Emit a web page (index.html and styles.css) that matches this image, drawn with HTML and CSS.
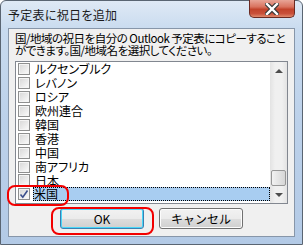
FILE: index.html
```html
<!DOCTYPE html>
<html lang="ja">
<head>
    <meta charset="UTF-8">
    <title>予定表に祝日を追加</title>
    <link rel="stylesheet" href="styles.css">
</head>
<body>
    <div class="window">
        <div class="titlebar">
            <span class="title">予定表に祝日を追加</span>
            <div class="close-btn">
                <svg width="14" height="12" viewBox="0 0 14 12">
                    <path d="M2 1 L12 11 M12 1 L2 11" stroke="#3a3a3a" stroke-width="4.6" stroke-linecap="square"/>
                    <path d="M2 1 L12 11 M12 1 L2 11" stroke="#fff" stroke-width="2.4" stroke-linecap="square"/>
                </svg>
            </div>
        </div>
        <div class="client">
            <p class="intro">国/地域の祝日を自分の Outlook 予定表にコピーすること<br>ができます。国/地域名を選択してください。</p>
            <div class="listbox">
                <ul class="items">
                    <li><span class="check"></span>ルクセンブルク</li>
                    <li><span class="check"></span>レバノン</li>
                    <li><span class="check"></span>ロシア</li>
                    <li><span class="check"></span>欧州連合</li>
                    <li><span class="check"></span>韓国</li>
                    <li><span class="check"></span>香港</li>
                    <li><span class="check"></span>中国</li>
                    <li><span class="check"></span>南アフリカ</li>
                    <li class="cut"><span class="check"></span>日本</li>
                    <li class="selected">
                        <span class="check">
                            <svg width="10" height="10" viewBox="0 0 10 10">
                                <path d="M1.5 5.5 L3.8 8.2 L8.5 1.5" stroke="#3b4f8c" stroke-width="1.6" fill="none"/>
                            </svg>
                        </span>
                        <span class="label">米国</span>
                    </li>
                </ul>
                <div class="scrollbar">
                    <span class="arrow up"></span>
                    <span class="track"><span class="thumb"></span></span>
                    <span class="arrow down"></span>
                </div>
            </div>
            <div class="buttons">
                <button class="btn default">OK</button>
                <button class="btn">キャンセル</button>
            </div>
        </div>
    </div>
    <div class="mark mark-item"></div>
    <div class="mark mark-ok"></div>
</body>
</html>
```

FILE: styles.css
```css
body {
    margin: 0;
    width: 303px;
    height: 245px;
    overflow: hidden;
    background: #fff;
    font-family: "Noto Sans CJK JP", sans-serif;
    font-feature-settings: "palt";
    font-size: 12px;
    color: #000;
}

.window {
    box-sizing: border-box;
    height: 245px;
    padding: 0 7px 7px 7px;
    border: 1px solid #5a6572;
    border-radius: 6px 6px 0 0;
    background: linear-gradient(to bottom, #dfe9f5 0, #c9dbef 28px, #bcd1ea 120px, #b3cae6 100%);
    display: flex;
    flex-direction: column;
}

.titlebar {
    height: 27px;
    display: flex;
    align-items: flex-start;
}

.title {
    padding: 6px 0 0 0;
    line-height: 16px;
    color: #1a1a1a;
    letter-spacing: 0.3px;
}

.close-btn {
    margin-left: auto;
    width: 46px;
    height: 18px;
    margin-top: -1px;
    box-sizing: border-box;
    border: 1px solid #6b2a22;
    border-top: none;
    border-radius: 0 0 5px 5px;
    background: linear-gradient(to bottom, #e8a597 0, #d9735f 40%, #c2432b 55%, #c9503a 80%, #e08a6d 100%);
    display: flex;
    align-items: center;
    justify-content: center;
}

.client {
    flex: 1;
    background: #f0f0f0;
    border: 1px solid #8796a9;
    display: flex;
    flex-direction: column;
    padding: 0 6px;
}

.intro {
    margin: 3px 0 0 0;
    line-height: 12px;
    font-size: 11.5px;
    letter-spacing: -0.5px;
    white-space: nowrap;
}

.listbox {
    margin-top: 5px;
    height: 141px;
    border: 1px solid #828790;
    background: #fff;
    display: flex;
}

.items {
    list-style: none;
    margin: 0;
    padding: 0;
    flex: 1;
    display: flex;
    flex-direction: column;
}

.items li {
    height: 14px;
    display: flex;
    align-items: center;
    padding-left: 2px;
    line-height: 14px;
    flex-shrink: 0;
}

.items li.cut {
    height: 12px;
    align-items: flex-start;
    overflow: hidden;
}

.check {
    box-sizing: border-box;
    width: 12px;
    height: 12px;
    margin-right: 5px;
    border: 1px solid #8e8f8f;
    background: linear-gradient(135deg, #d6d6d6 0, #ececec 60%, #fdfdfd 100%);
    box-shadow: inset 0 0 0 1px #f4f4f4;
    display: flex;
    align-items: center;
    justify-content: center;
    flex-shrink: 0;
}

.items li.selected {
    height: 15px;
}

.label {
    flex: 1;
    height: 14px;
    background: #a8cdf1;
    outline: 1px dotted #000;
    outline-offset: -1px;
    padding-left: 1px;
    margin-left: -2px;
}

.scrollbar {
    width: 17px;
    display: flex;
    flex-direction: column;
    background: linear-gradient(to right, #e3e3e3, #f0f0f0 30%, #f0f0f0 70%, #e3e3e3);
}

.arrow {
    height: 17px;
    display: flex;
    align-items: center;
    justify-content: center;
}

.arrow::before {
    content: "";
    border-left: 4px solid transparent;
    border-right: 4px solid transparent;
}

.arrow.up::before {
    border-bottom: 4px solid #4d4d4d;
}

.arrow.down::before {
    border-top: 4px solid #4d4d4d;
}

.track {
    flex: 1;
    display: flex;
    flex-direction: column;
    justify-content: flex-end;
    padding: 0 1px;
}

.thumb {
    height: 14px;
    border: 1px solid #979797;
    border-radius: 2px;
    background: linear-gradient(to right, #f2f2f2, #e4e4e4 50%, #d6d6d6);
}

.buttons {
    display: flex;
    justify-content: center;
    gap: 15px;
    margin-top: 4px;
}

.btn {
    width: 84px;
    height: 21px;
    padding: 0;
    font-family: inherit;
    font-size: 12px;
    color: #000;
    border: 1px solid #707070;
    border-radius: 3px;
    background: linear-gradient(to bottom, #f2f2f2 0, #ebebeb 50%, #dddddd 51%, #cfcfcf 100%);
    box-shadow: inset 0 0 0 1px #fcfcfc;
}

.btn.default {
    border-color: #3c7fb1;
    box-shadow: inset 0 0 0 1px #48d7f9;
}

.mark {
    position: absolute;
    border: 2px solid #f20000;
    border-radius: 8px;
    box-sizing: border-box;
}

.mark-item {
    left: 7px;
    top: 185px;
    width: 62px;
    height: 21px;
}

.mark-ok {
    left: 51px;
    top: 207px;
    width: 103px;
    height: 28px;
}
```
